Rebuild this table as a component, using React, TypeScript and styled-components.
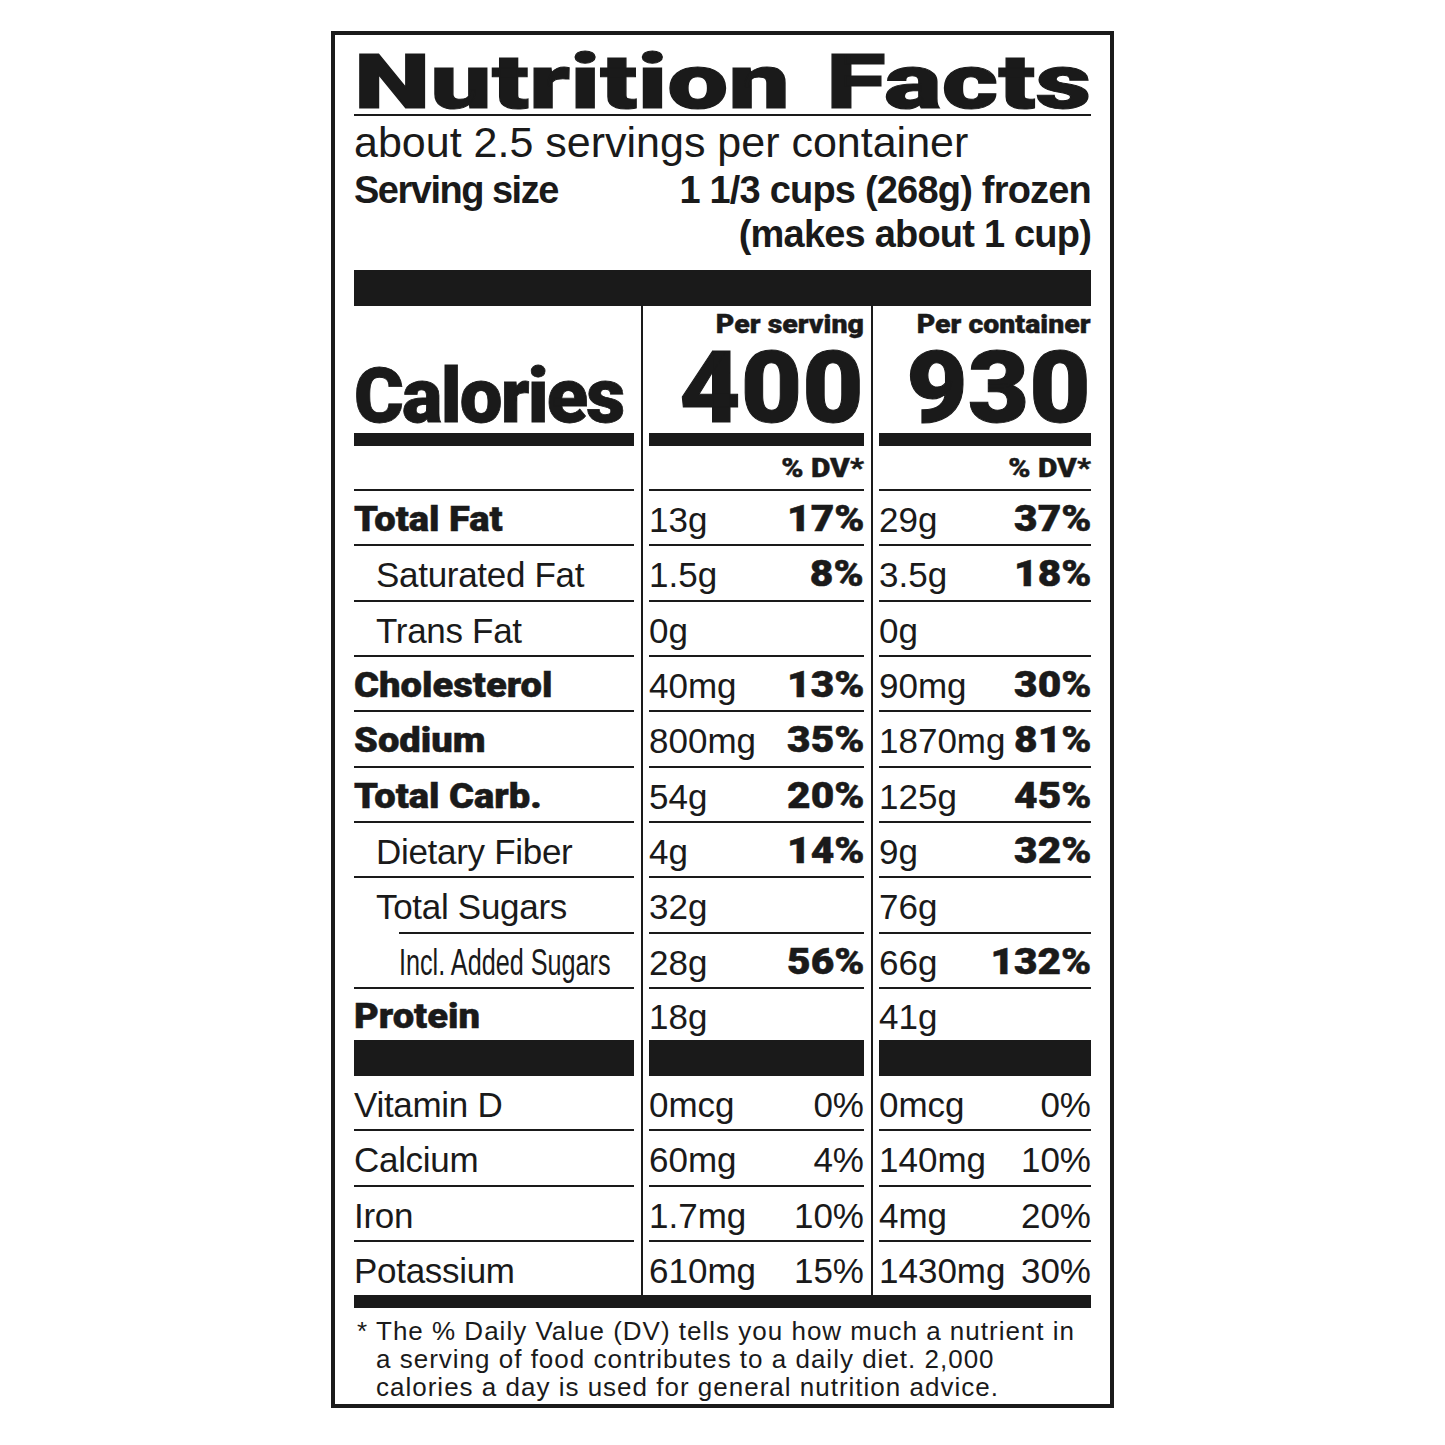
import React from 'react';
import styled, { createGlobalStyle } from 'styled-components';

const INK = '#1a1a1a';
const HEAVY = `"Roboto", "Liberation Sans", Arial, sans-serif`;
const PLAIN = `"Liberation Sans", Arial, sans-serif`;

const Global = createGlobalStyle`
  html, body { margin: 0; padding: 0; background: #ffffff; }
  body { font-family: ${PLAIN}; color: ${INK}; }
`;

const Page = styled.div`
  padding: 31px 0 30px 331px;
`;

const Label = styled.section`
  box-sizing: border-box;
  width: 783px;
  border: 4px solid ${INK};
  padding: 0 19px 3px;
`;

const TitleRow = styled.h1`
  margin: 0;
  padding-top: 15px;
  height: 64px;
  display: flex;
  justify-content: space-between;
  border-bottom: 2px solid ${INK};
  font-family: ${HEAVY};
  font-weight: 900;
  font-size: 76px;
  line-height: 64px;
  white-space: nowrap;
  -webkit-text-stroke: 1px ${INK};
`;

const TitleWord = styled.span<{ $anchor: 'left' | 'right' }>`
  display: inline-block;
  transform: scaleX(1.43);
  transform-origin: ${(p) => p.$anchor};
`;

const ServingsLine = styled.div`
  margin-top: 4px;
  font-size: 43px;
  line-height: 44px;
  white-space: nowrap;
`;

const ServingRow = styled.div`
  margin-top: 4px;
  display: flex;
  justify-content: space-between;
  align-items: flex-start;
  font-weight: 700;
  font-size: 38px;
  line-height: 44px;
  white-space: nowrap;
`;

const ServingLabel = styled.span`
  letter-spacing: -1.5px;
`;

const ServingAmount = styled.div`
  text-align: right;
  letter-spacing: -0.8px;
`;

const ThickBar = styled.div<{ $h: number; $mt?: number }>`
  height: ${(p) => p.$h}px;
  margin-top: ${(p) => p.$mt ?? 0}px;
  background: ${INK};
`;

const Grid = styled.div`
  display: grid;
  grid-template-columns: 289px 230px 218px;
`;

const Cell = styled.div<{ $col: number }>`
  min-width: 0;
  padding-left: ${(p) => (p.$col === 0 ? 0 : 6)}px;
  padding-right: ${(p) => (p.$col === 2 ? 0 : 7)}px;
  border-right: ${(p) => (p.$col < 2 ? `2px solid ${INK}` : 'none')};
`;

const HeadTop = styled.div<{ $align: 'start' | 'end' }>`
  height: 127px;
  display: flex;
  flex-direction: column;
  justify-content: flex-end;
  align-items: ${(p) => (p.$align === 'start' ? 'flex-start' : 'flex-end')};
`;

const CaloriesWord = styled.div`
  font-family: ${HEAVY};
  font-weight: 900;
  font-size: 76px;
  line-height: 60px;
  letter-spacing: -1.8px;
  margin-bottom: 7px;
  white-space: nowrap;
  -webkit-text-stroke: 0.8px ${INK};
`;

const ColumnHead = styled.div`
  font-family: ${HEAVY};
  font-weight: 900;
  font-size: 25px;
  line-height: 26px;
  margin-bottom: 6px;
  white-space: nowrap;
  transform: scaleX(1.14);
  transform-origin: right;
  -webkit-text-stroke: 0.4px ${INK};
`;

const BigNumber = styled.div`
  font-family: ${HEAVY};
  font-weight: 900;
  font-size: 101px;
  line-height: 88px;
  margin-bottom: 1px;
  transform: scaleX(1.05);
  transform-origin: right;
  -webkit-text-stroke: 1px ${INK};
`;

const DVHead = styled.div`
  height: 43px;
  box-sizing: border-box;
  padding-top: 10px;
  display: flex;
  justify-content: flex-end;
  font-family: ${HEAVY};
  font-weight: 900;
  font-size: 25px;
  line-height: 26px;
  -webkit-text-stroke: 0.4px ${INK};
`;

const DVText = styled.span`
  display: inline-block;
  transform: scaleX(1.2);
  transform-origin: right;
`;

const Rule = styled.div<{ $inset?: number }>`
  height: 2px;
  margin-left: ${(p) => p.$inset ?? 0}px;
  background: ${INK};
`;

const CellBody = styled.div<{ $h: number; $indent?: number }>`
  box-sizing: border-box;
  height: ${(p) => p.$h}px;
  padding-top: 4px;
  padding-left: ${(p) => p.$indent ?? 0}px;
  display: flex;
  align-items: center;
  justify-content: space-between;
  font-size: 35px;
  line-height: 35px;
  white-space: nowrap;
`;

const NutrientName = styled.span<{ $bold: boolean }>`
  display: inline-block;
  font-family: ${(p) => (p.$bold ? HEAVY : PLAIN)};
  font-weight: ${(p) => (p.$bold ? 900 : 400)};
  letter-spacing: ${(p) => (p.$bold ? '0' : '-0.3px')};
  transform: ${(p) => (p.$bold ? 'scaleX(1.09)' : 'none')};
  transform-origin: left;
  -webkit-text-stroke: ${(p) => (p.$bold ? `0.5px ${INK}` : '0')};
`;

const CondensedName = styled.span`
  display: inline-block;
  font-size: 36px;
  transform: scaleX(0.7);
  transform-origin: left;
`;

const Amount = styled.span``;

const Percent = styled.span<{ $bold: boolean }>`
  display: inline-block;
  font-family: ${(p) => (p.$bold ? HEAVY : PLAIN)};
  font-weight: ${(p) => (p.$bold ? 900 : 400)};
  font-size: ${(p) => (p.$bold ? 36 : 35)}px;
  transform: ${(p) => (p.$bold ? 'scaleX(1.13)' : 'none')};
  transform-origin: right;
  -webkit-text-stroke: ${(p) => (p.$bold ? `0.5px ${INK}` : '0')};
`;

const Footnote = styled.div`
  margin-top: 9px;
  display: flex;
  font-size: 26px;
  line-height: 28px;
  letter-spacing: 1px;
  white-space: nowrap;
`;

const Asterisk = styled.span`
  width: 22px;
  flex: none;
  padding-left: 3px;
  box-sizing: border-box;
`;

const FootText = styled.div``;

type Nutrient = {
  name: string;
  level: 0 | 1 | 2;
  bold: boolean;
  serving: [string, string?];
  container: [string, string?];
  ruleInset?: number;
  last?: boolean;
  boldPct: boolean;
};

const ROW_H = 53.33;

const nutrients: Nutrient[] = [
  { name: 'Total Fat', level: 0, bold: true, serving: ['13g', '17%'], container: ['29g', '37%'], boldPct: true },
  { name: 'Saturated Fat', level: 1, bold: false, serving: ['1.5g', '8%'], container: ['3.5g', '18%'], boldPct: true },
  { name: 'Trans Fat', level: 1, bold: false, serving: ['0g'], container: ['0g'], boldPct: true },
  { name: 'Cholesterol', level: 0, bold: true, serving: ['40mg', '13%'], container: ['90mg', '30%'], boldPct: true },
  { name: 'Sodium', level: 0, bold: true, serving: ['800mg', '35%'], container: ['1870mg', '81%'], boldPct: true },
  { name: 'Total Carb.', level: 0, bold: true, serving: ['54g', '20%'], container: ['125g', '45%'], boldPct: true },
  { name: 'Dietary Fiber', level: 1, bold: false, serving: ['4g', '14%'], container: ['9g', '32%'], boldPct: true },
  { name: 'Total Sugars', level: 1, bold: false, serving: ['32g'], container: ['76g'], ruleInset: 45, boldPct: true },
  { name: 'Incl. Added Sugars', level: 2, bold: false, serving: ['28g', '56%'], container: ['66g', '132%'], boldPct: true },
  { name: 'Protein', level: 0, bold: true, serving: ['18g'], container: ['41g'], last: true, boldPct: true },
];

const vitamins: Nutrient[] = [
  { name: 'Vitamin D', level: 0, bold: false, serving: ['0mcg', '0%'], container: ['0mcg', '0%'], boldPct: false },
  { name: 'Calcium', level: 0, bold: false, serving: ['60mg', '4%'], container: ['140mg', '10%'], boldPct: false },
  { name: 'Iron', level: 0, bold: false, serving: ['1.7mg', '10%'], container: ['4mg', '20%'], boldPct: false },
  { name: 'Potassium', level: 0, bold: false, serving: ['610mg', '15%'], container: ['1430mg', '30%'], boldPct: false, last: true },
];

const INDENT = [0, 22, 45];

function NutrientRow({ n, lastHeight }: { n: Nutrient; lastHeight: number }) {
  const h = n.last ? lastHeight : ROW_H;
  return (
    <Grid>
      <Cell $col={0}>
        <CellBody $h={h} $indent={INDENT[n.level]}>
          {n.level === 2 ? (
            <CondensedName>{n.name}</CondensedName>
          ) : (
            <NutrientName $bold={n.bold}>{n.name}</NutrientName>
          )}
        </CellBody>
        {!n.last && <Rule $inset={n.ruleInset} />}
      </Cell>
      {[n.serving, n.container].map((v, i) => (
        <Cell $col={i + 1} key={i}>
          <CellBody $h={h}>
            <Amount>{v[0]}</Amount>
            {v[1] && <Percent $bold={n.boldPct}>{v[1]}</Percent>}
          </CellBody>
          {!n.last && <Rule />}
        </Cell>
      ))}
    </Grid>
  );
}

export default function App() {
  return (
    <>
      <Global />
      <Page>
        <Label>
          <TitleRow>
            <TitleWord $anchor="left">Nutrition</TitleWord>
            <TitleWord $anchor="right">Facts</TitleWord>
          </TitleRow>
          <ServingsLine>about 2.5 servings per container</ServingsLine>
          <ServingRow>
            <ServingLabel>Serving size</ServingLabel>
            <ServingAmount>
              <div>1 1/3 cups (268g) frozen</div>
              <div>(makes about 1 cup)</div>
            </ServingAmount>
          </ServingRow>
          <ThickBar $h={36} $mt={14} />

          <Grid>
            <Cell $col={0}>
              <HeadTop $align="start">
                <CaloriesWord>Calories</CaloriesWord>
              </HeadTop>
              <ThickBar $h={13} />
              <DVHead />
              <Rule />
            </Cell>
            <Cell $col={1}>
              <HeadTop $align="end">
                <ColumnHead>Per serving</ColumnHead>
                <BigNumber>400</BigNumber>
              </HeadTop>
              <ThickBar $h={13} />
              <DVHead>
                <DVText>% DV*</DVText>
              </DVHead>
              <Rule />
            </Cell>
            <Cell $col={2}>
              <HeadTop $align="end">
                <ColumnHead>Per container</ColumnHead>
                <BigNumber>930</BigNumber>
              </HeadTop>
              <ThickBar $h={13} />
              <DVHead>
                <DVText>% DV*</DVText>
              </DVHead>
              <Rule />
            </Cell>
          </Grid>

          {nutrients.map((n) => (
            <NutrientRow key={n.name} n={n} lastHeight={51} />
          ))}

          <Grid>
            {[0, 1, 2].map((c) => (
              <Cell $col={c} key={c}>
                <ThickBar $h={36} />
              </Cell>
            ))}
          </Grid>

          {vitamins.map((n) => (
            <NutrientRow key={n.name} n={n} lastHeight={53} />
          ))}

          <ThickBar $h={13} />

          <Footnote>
            <Asterisk>*</Asterisk>
            <FootText>
              The % Daily Value (DV) tells you how much a nutrient in
              <br />
              a serving of food contributes to a daily diet. 2,000
              <br />
              calories a day is used for general nutrition advice.
            </FootText>
          </Footnote>
        </Label>
      </Page>
    </>
  );
}
